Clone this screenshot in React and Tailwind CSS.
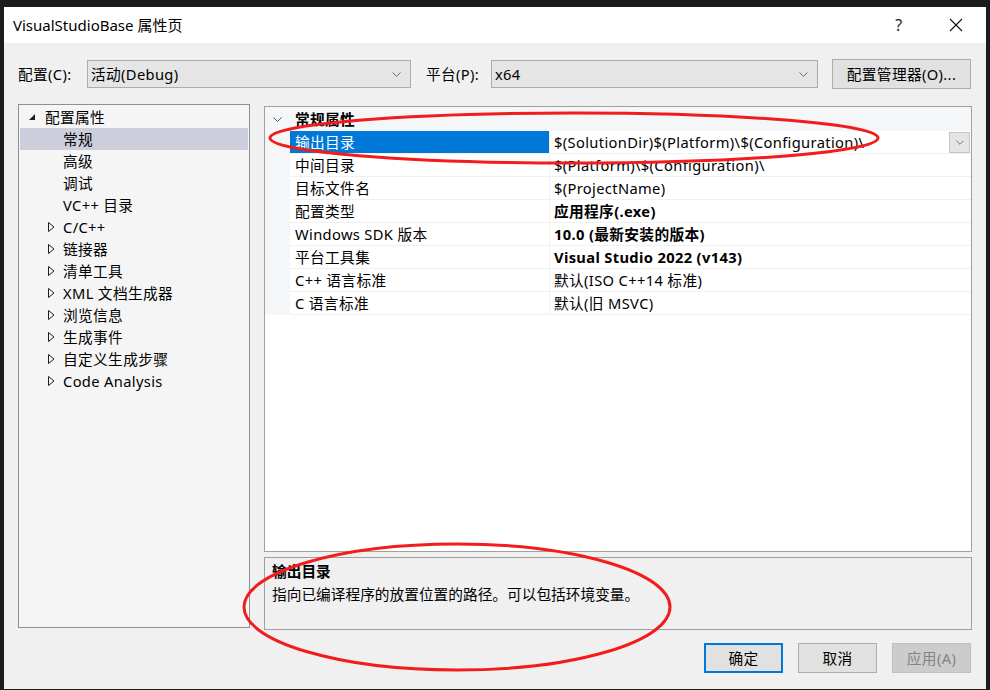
const FONT = { fontFamily: '"Noto Sans", "Noto Sans CJK SC", sans-serif' };

const tree = [
  { label: "常规", level: 1, selected: true },
  { label: "高级", level: 1 },
  { label: "调试", level: 1 },
  { label: "VC++ 目录", level: 1 },
  { label: "C/C++", level: 2 },
  { label: "链接器", level: 2 },
  { label: "清单工具", level: 2 },
  { label: "XML 文档生成器", level: 2 },
  { label: "浏览信息", level: 2 },
  { label: "生成事件", level: 2 },
  { label: "自定义生成步骤", level: 2 },
  { label: "Code Analysis", level: 2 },
];

const props = [
  { name: "输出目录", value: "$(SolutionDir)$(Platform)\\$(Configuration)\\", selected: true },
  { name: "中间目录", value: "$(Platform)\\$(Configuration)\\" },
  { name: "目标文件名", value: "$(ProjectName)" },
  { name: "配置类型", value: "应用程序(.exe)", bold: true },
  { name: "Windows SDK 版本", value: "10.0 (最新安装的版本)", bold: true },
  { name: "平台工具集", value: "Visual Studio 2022 (v143)", bold: true },
  { name: "C++ 语言标准", value: "默认(ISO C++14 标准)" },
  { name: "C 语言标准", value: "默认(旧 MSVC)" },
];

const Chevron = ({ className = "", w = 9, h = 5 }) => (
  <svg width={w} height={h} viewBox="0 0 9 5" className={className}>
    <polyline points="0.5,0.5 4.5,4.5 8.5,0.5" fill="none" stroke="currentColor" strokeWidth="1" />
  </svg>
);

const Collapsed = () => (
  <svg width="7" height="10" viewBox="0 0 7 10" className="text-[#1e1e1e]">
    <polygon points="0.5,0.5 6,5 0.5,9.5" fill="none" stroke="currentColor" strokeWidth="1" />
  </svg>
);

const Combo = ({ value, width }) => (
  <div className={`${width} h-[28px] flex items-center justify-between bg-[#e5e5e5] border border-[#acacac] pl-[3px] pr-[9px]`}>
    <span>{value}</span>
    <Chevron className="text-[#6d6d6d]" />
  </div>
);

export default function App() {
  return (
    <div className="relative w-[990px] h-[690px] bg-[#1c1c1c] pt-[7px] pl-[4px] overflow-hidden text-[14.7px] tracking-[0.35px] text-black" style={FONT}>
      <div className="w-[982px] h-[682px] flex flex-col bg-[#f0f0f0]">
        {/* Title bar */}
        <div className="h-[36px] bg-white flex items-center pl-[9px] shrink-0">
          <span className="text-[15px] tracking-normal flex-1">VisualStudioBase 属性页</span>
          <span className="text-[16px] text-[#222] w-[20px] text-center mr-[40px]">?</span>
          <svg width="14" height="14" viewBox="0 0 14 14" className="mr-[23px]">
            <path d="M1 1 L13 13 M13 1 L1 13" stroke="#111" strokeWidth="1.1" />
          </svg>
        </div>

        {/* Config / platform row */}
        <div className="flex items-center h-[30px] mt-[16px] pl-[14px]">
          <span className="w-[69px]">配置(C):</span>
          <Combo value="活动(Debug)" width="w-[324px]" />
          <span className="w-[65px] ml-[15px]">平台(P):</span>
          <Combo value="x64" width="w-[327px]" />
          <button className="ml-[14px] w-[139px] h-[30px] bg-[#e1e1e1] border border-[#adadad]">配置管理器(O)...</button>
        </div>

        {/* Main area */}
        <div className="flex items-start gap-[14px] mt-[15px] pl-[14px]">
          {/* Tree */}
          <div className="w-[232px] h-[524px] bg-[#f5f5f5] border border-[#8e8f94] p-px">
            <div className="h-[22px] flex items-center">
              <svg width="6" height="6" viewBox="0 0 6 6" className="ml-[9px] mr-[10px]">
                <polygon points="6,0 6,6 0,6" fill="#1e1e1e" />
              </svg>
              <span>配置属性</span>
            </div>
            {tree.map((t) => (
              <div key={t.label} className={`h-[22px] flex items-center ${t.selected ? "bg-[#cccedb]" : ""}`}>
                <div className="w-[43px] pl-[28px] flex items-center">{t.level === 2 && <Collapsed />}</div>
                <span>{t.label}</span>
              </div>
            ))}
          </div>

          {/* Right column */}
          <div className="w-[708px] mt-[2px] flex flex-col gap-[5px]">
            <div className="h-[446px] bg-white border border-[#a0a0a0]">
              <div className="h-[24px] bg-[#f5f6f8] flex items-center">
                <Chevron className="ml-[8px] mr-[13px] text-[#555]" />
                <span className="font-bold">常规属性</span>
              </div>
              {props.map((p) => (
                <div key={p.name} className="h-[23px] flex bg-[#f5f6f8]">
                  <div className={`w-[259px] ml-[25px] pl-[5px] flex items-center border-b border-[#f0f0f0] ${p.selected ? "bg-[#0078d7] text-white" : "bg-white"}`}>
                    {p.name}
                  </div>
                  <div className="flex-1 flex items-center justify-between bg-white border-b border-l border-[#f0f0f0] pl-[4px] pr-px">
                    <span className={p.bold ? "font-bold" : ""}>{p.value}</span>
                    {p.selected && (
                      <div className="w-[21px] h-[21px] bg-[#e5e5e5] border border-[#c4c4c4] flex items-center justify-center">
                        <Chevron className="text-[#666]" w={8} h={5} />
                      </div>
                    )}
                  </div>
                </div>
              ))}
            </div>
            <div className="h-[73px] bg-[#f0f0f0] border border-[#a0a0a0] px-[7px] pt-[2px] leading-[23px] tracking-normal">
              <div className="font-bold">输出目录</div>
              <div>指向已编译程序的放置位置的路径。可以包括环境变量。</div>
            </div>
          </div>
        </div>

        {/* Buttons */}
        <div className="flex justify-end gap-[15px] mt-[13px] pr-[15px]">
          <button className="w-[79px] h-[30px] bg-[#e1e1e1] border-2 border-[#0078d7]">确定</button>
          <button className="w-[79px] h-[30px] bg-[#e1e1e1] border border-[#adadad]">取消</button>
          <button className="w-[79px] h-[30px] bg-[#cccccc] border border-[#bfbfbf] text-[#838383]">应用(A)</button>
        </div>
      </div>

      {/* Red annotation ellipses */}
      <svg className="absolute inset-0 pointer-events-none" width="990" height="690">
        <ellipse cx="574" cy="138" rx="304" ry="25" fill="none" stroke="#f21c1c" strokeWidth="3" />
        <ellipse cx="457" cy="607" rx="213" ry="63" fill="none" stroke="#f21c1c" strokeWidth="3" />
      </svg>
    </div>
  );
}
